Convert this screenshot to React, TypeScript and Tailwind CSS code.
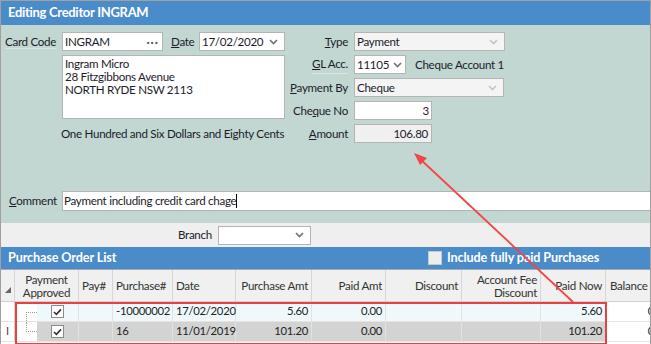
import React from 'react'

const Chevron = ({ light = false }: { light?: boolean }) => (
  <svg width="9" height="6" viewBox="0 0 9 6" className="shrink-0">
    <path d="M1 1 L4.5 4.5 L8 1" fill="none" stroke={light ? '#c4c4c4' : '#707070'} strokeWidth="1.6" />
  </svg>
)

const Check = () => (
  <div className="w-[13px] h-[13px] border border-[#8a8a8a] bg-white flex items-center justify-center">
    <svg width="9" height="8" viewBox="0 0 9 8">
      <path d="M1 4 L3.4 6.4 L8 1.4" fill="none" stroke="#333" strokeWidth="1.6" />
    </svg>
  </div>
)

const Field = ({ className = '', children }: { className?: string; children?: React.ReactNode }) => (
  <div className={`h-[19px] border border-[#b4b4b4] flex items-center px-[2px] whitespace-nowrap ${className}`}>{children}</div>
)

const Label = ({ children }: { children: React.ReactNode }) => (
  <div className="w-[64px] pr-[6px] flex justify-end whitespace-nowrap">{children}</div>
)

const headCell = 'border-r border-[#d6d6d6] flex items-center px-[3px] leading-[13px] whitespace-nowrap'
const cell = 'border-r border-[#e2e2e2] flex items-center px-[3px] whitespace-nowrap'

const App: React.FC = () => {
  return (
    <div className="relative w-[651px] h-[344px] overflow-hidden border-l border-t border-r border-[#a0a0a0] bg-white text-[11.6px] tracking-[-0.3px] text-[#1b1b2b] font-['Lato',sans-serif]">
      {/* title */}
      <div className="h-[24px] bg-[#4a8bca] text-white font-bold text-[13px] pl-[7px] flex items-center">
        Editing Creditor INGRAM
      </div>

      {/* form */}
      <div className="h-[198px] bg-[#c2d7d2] flex flex-col">
        <div className="flex pt-[7px]">
          <div className="w-[289px] pl-[4px]">
            <div className="flex items-center h-[19px]">
              <span className="w-[57px] whitespace-nowrap"><span className="border-b border-[#d9e4e1]">Card Code</span></span>
              <Field className="w-[101px] bg-white justify-between">
                <span>INGRAM</span>
                <span className="text-[#555] tracking-[1px] pr-[1px] font-bold leading-none">···</span>
              </Field>
              <span className="ml-[8px] w-[28px]"><span className="underline">D</span>ate</span>
              <Field className="w-[86px] bg-white justify-between pr-[6px]">
                <span>17/02/2020</span>
                <Chevron />
              </Field>
            </div>
            <div className="ml-[57px] mt-[4px] w-[223px] h-[64px] bg-white border border-[#b4b4b4] px-[2px] pt-[1px] leading-[13px]">
              <div>Ingram Micro</div>
              <div>28 Fitzgibbons Avenue</div>
              <div>NORTH RYDE NSW 2113</div>
            </div>
            <div className="ml-[56px] mt-[6px] whitespace-nowrap">One Hundred and Six Dollars and Eighty Cents</div>
          </div>

          <div className="flex flex-col gap-[4px]">
            <div className="flex items-center">
              <Label><span><span className="underline">T</span>ype</span></Label>
              <Field className="w-[151px] bg-[#f4f4f4] justify-between pr-[6px]">
                <span>Payment</span>
                <Chevron light />
              </Field>
            </div>
            <div className="flex items-center">
              <Label><span className="border-b border-[#dde6e3]"><span className="underline">G</span>L Acc.</span></Label>
              <Field className="w-[52px] bg-white justify-between pr-[3px]">
                <span>11105</span>
                <Chevron />
              </Field>
              <span className="ml-[9px] whitespace-nowrap">Cheque Account 1</span>
            </div>
            <div className="flex items-center">
              <Label><span><span className="underline">P</span>ayment By</span></Label>
              <Field className="w-[150px] bg-[#f4f4f4] justify-between pr-[6px]">
                <span>Cheque</span>
                <Chevron light />
              </Field>
            </div>
            <div className="flex items-center">
              <Label><span>Che<span className="underline">q</span>ue No</span></Label>
              <Field className="w-[78px] bg-white justify-end">3</Field>
            </div>
            <div className="flex items-center">
              <Label><span><span className="underline">A</span>mount</span></Label>
              <Field className="w-[78px] bg-[#f0f0f0] justify-end pr-[3px]">106.80</Field>
            </div>
          </div>
        </div>

        <div className="mt-auto mb-[12px] flex items-center">
          <span className="pl-[8px] w-[61px] whitespace-nowrap"><span className="underline">C</span>omment</span>
          <div className="flex-1 h-[20px] bg-white border-y border-l border-[#b4b4b4] flex items-center px-[1px] whitespace-nowrap">
            Payment including credit card chage<span className="w-px h-[14px] bg-black" />
          </div>
        </div>
      </div>

      {/* branch strip */}
      <div className="h-[24px] bg-[#efefef] flex items-center">
        <span className="ml-[177px] w-[40px]">Branch</span>
        <div className="w-[93px] h-[19px] bg-white border border-[#b4b4b4] flex items-center justify-end pr-[6px]">
          <Chevron />
        </div>
      </div>

      {/* list header */}
      <div className="h-[22px] bg-[#4a8bca] text-white font-bold text-[12.6px] tracking-[-0.1px] flex items-center whitespace-nowrap">
        <span className="pl-[7px] w-[427px]">Purchase Order List</span>
        <div className="w-[14px] h-[14px] bg-[#eeeeee] border border-[#c8c8c8]" />
        <span className="ml-[5px]">Include fully paid Purchases</span>
      </div>

      {/* grid */}
      <div className="border-t border-[#a8a8a8] text-[#222]">
        <div className="grid grid-cols-[14px_64px_34px_60px_63px_76px_74px_76px_79px_65px_1fr] h-[32px] bg-[#f0f0f0] text-[#333] border-b border-[#d0d0d0]">
          <div className={`${headCell} items-end pb-[8px] pl-[4px]`}>
            <svg width="6" height="6" viewBox="0 0 6 6"><path d="M6 0 L6 6 L0 6 Z" fill="#666" /></svg>
          </div>
          <div className={`${headCell} justify-center text-center`}>Payment<br />Approved</div>
          <div className={headCell}>Pay#</div>
          <div className={headCell}>Purchase#</div>
          <div className={headCell}>Date</div>
          <div className={`${headCell} justify-end`}>Purchase Amt</div>
          <div className={`${headCell} justify-end`}>Paid Amt</div>
          <div className={`${headCell} justify-end`}>Discount</div>
          <div className={`${headCell} justify-end text-right`}>Account Fee<br />Discount</div>
          <div className={`${headCell} justify-end`}>Paid Now</div>
          <div className={`${headCell} border-r-0 pl-[4px]`}>Balance</div>
        </div>

        {[
          { bg: 'bg-[#eff9fc]', po: '-10000002', date: '17/02/2020', amt: '5.60', now: '5.60' },
          { bg: 'bg-[#d3d3d3]', po: '16', date: '11/01/2019', amt: '101.20', now: '101.20' },
        ].map((r, i) => (
          <div key={r.po} className="grid grid-cols-[14px_22px_42px_34px_60px_63px_76px_74px_76px_79px_65px_1fr] h-[20px] border-b border-[#e4e4e4] text-[11.3px]">
            <div className="border-r border-[#d0d0d0] bg-white flex items-center justify-center text-[11px] text-[#444]">
              {i === 1 ? 'I' : ''}
            </div>
            <div className="bg-white relative">
              <div className={`absolute left-[11px] w-[11px] border-dotted border-[#999] ${i === 0 ? 'top-[10px] bottom-0 border-l border-t' : 'top-0 h-[10px] border-l border-b'}`} />
            </div>
            <div className={`${r.bg} flex items-center pl-[14px] border-r border-[#e2e2e2]`}><Check /></div>
            <div className={`${r.bg} ${cell}`} />
            <div className={`${r.bg} ${cell} px-[1px]`}>{r.po}</div>
            <div className={`${r.bg} ${cell} px-[2px]`}>{r.date}</div>
            <div className={`${r.bg} ${cell} justify-end`}>{r.amt}</div>
            <div className={`${r.bg} ${cell} justify-end`}>0.00</div>
            <div className={`${r.bg} ${cell}`} />
            <div className={`${r.bg} ${cell}`} />
            <div className={`${r.bg} ${cell} justify-end`}>{r.now}</div>
            <div className="bg-white flex items-center justify-end -mr-[4px] overflow-hidden">0</div>
          </div>
        ))}
      </div>

      {/* annotation */}
      <div className="absolute left-[14px] top-[301px] w-[592px] h-[43px] border-2 border-[#e8413f] pointer-events-none" />
      <svg className="absolute left-0 top-0 pointer-events-none" width="651" height="344">
        <line x1="572" y1="301" x2="418" y2="157" stroke="#f04646" strokeWidth="1.8" />
        <path d="M413 152 L426 157 L419 164 Z" fill="#f04646" />
      </svg>
    </div>
  )
}

export default App
